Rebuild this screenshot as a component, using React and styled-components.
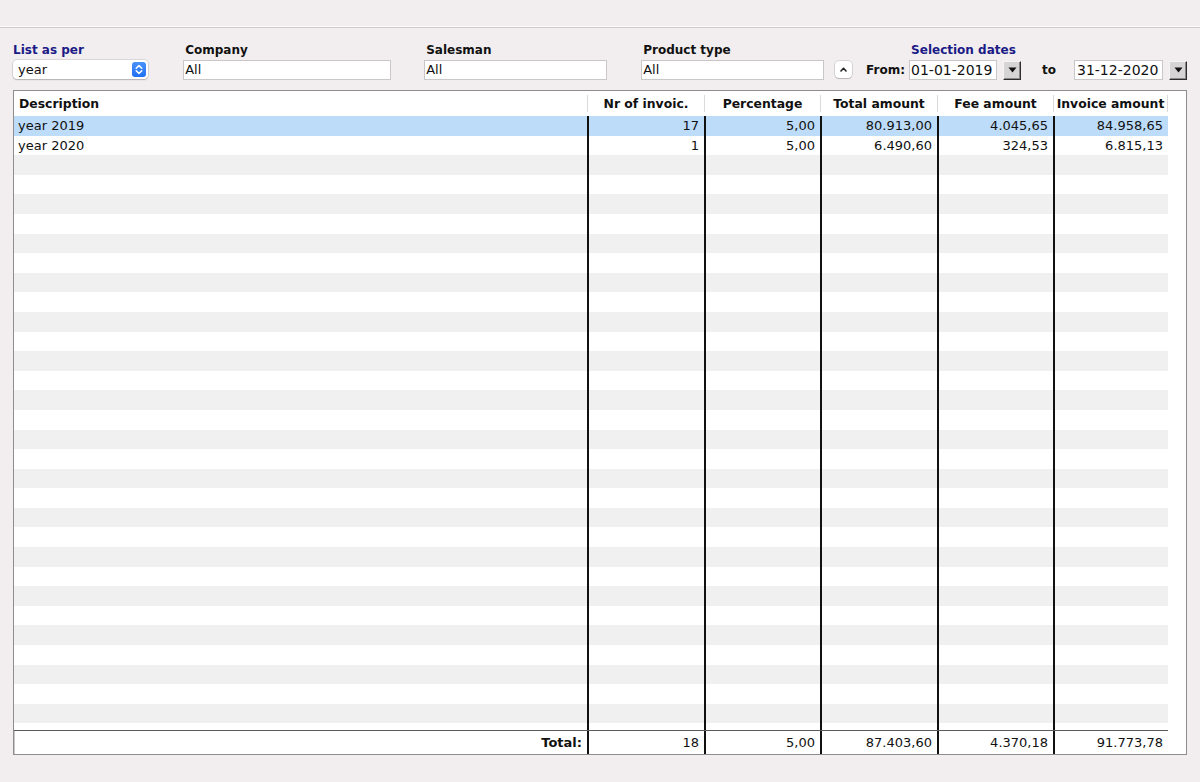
import React from 'react';
import styled, { createGlobalStyle } from 'styled-components';

const GlobalStyle = createGlobalStyle`
    html, body {
        margin: 0;
        padding: 0;
        background: #f2eeef;
    }
    body {
        font-family: "DejaVu Sans", "Liberation Sans", sans-serif;
        color: #111;
    }
`;

const columns = [
    { key: 'desc', title: 'Description', width: 573, align: 'left' },
    { key: 'count', title: 'Nr of invoic.', width: 117, align: 'right' },
    { key: 'pct', title: 'Percentage', width: 116, align: 'right' },
    { key: 'total', title: 'Total amount', width: 117, align: 'right' },
    { key: 'fee', title: 'Fee amount', width: 116, align: 'right' },
    { key: 'invoice', title: 'Invoice amount', width: 115, align: 'right' }
];

const data = [
    { desc: 'year 2019', count: '17', pct: '5,00', total: '80.913,00', fee: '4.045,65', invoice: '84.958,65' },
    { desc: 'year 2020', count: '1', pct: '5,00', total: '6.490,60', fee: '324,53', invoice: '6.815,13' }
];

const totals = { desc: 'Total:', count: '18', pct: '5,00', total: '87.403,60', fee: '4.370,18', invoice: '91.773,78' };

const ROW_COUNT = 32;

const Page = styled.div`
    width: 1200px;
    height: 782px;
    overflow: hidden;
`;

const TopBar = styled.div`
    height: 26px;
    border-bottom: 1px solid #fbf9f9;
    box-shadow: 0 1px 0 #cfcbcc;
`;

const Controls = styled.div`
    display: flex;
    align-items: flex-end;
    padding: 16px 13px 0;
`;

const Field = styled.div`
    display: flex;
    flex-direction: column;
    width: ${p => p.$width}px;
    margin-left: ${p => p.$gap || 0}px;
`;

const FieldLabel = styled.div`
    font-size: 12px;
    font-weight: bold;
    line-height: 15px;
    height: 15px;
    margin-bottom: 2px;
    padding-left: ${p => p.$indent || 0}px;
    color: ${p => (p.$navy ? '#1b1a86' : '#111')};
    white-space: nowrap;
`;

const TextBox = styled.div`
    box-sizing: border-box;
    height: 20px;
    width: ${p => p.$width}px;
    background: #fff;
    border: 1px solid #c9c7c8;
    font-size: ${p => p.$size || 13}px;
    line-height: 18px;
    padding-left: ${p => p.$pad || 1}px;
    white-space: nowrap;
    overflow: hidden;
`;

const SelectBox = styled.div`
    box-sizing: border-box;
    display: flex;
    align-items: center;
    justify-content: space-between;
    height: 19px;
    margin-bottom: 1px;
    background: #fff;
    border-radius: 4px;
    box-shadow: 0 0 0 0.5px rgba(0, 0, 0, 0.18), 0 1px 1.5px rgba(0, 0, 0, 0.18);
    padding: 0 2px 0 5px;
    font-size: 13px;
`;

const Stepper = styled.span`
    display: flex;
    align-items: center;
    justify-content: center;
    width: 14px;
    height: 15px;
    border-radius: 3px;
    background: linear-gradient(#4a93fa, #1f6ff2);
`;

const UpButton = styled.div`
    box-sizing: border-box;
    display: flex;
    align-items: center;
    justify-content: center;
    width: 17px;
    height: 17px;
    margin-left: 11px;
    margin-bottom: 2px;
    background: #fff;
    border-radius: 4px;
    box-shadow: 0 0 0 0.5px rgba(0, 0, 0, 0.22), 0 1px 1px rgba(0, 0, 0, 0.15);
`;

const DateGroup = styled.div`
    display: flex;
    flex-direction: column;
    margin-left: 14px;
`;

const DateRow = styled.div`
    display: flex;
    align-items: center;
    height: 20px;
`;

const InlineLabel = styled.span`
    font-size: 12px;
    font-weight: bold;
    margin-left: ${p => p.$gap || 0}px;
    margin-right: ${p => p.$after || 0}px;
`;

const ComboButton = styled.div`
    box-sizing: border-box;
    display: flex;
    align-items: center;
    justify-content: center;
    width: 18px;
    height: 19px;
    margin-left: 6px;
    background: #d6d4d4;
    border: 1px solid;
    border-color: #f4f4f4 #2e2e2e #2e2e2e #f4f4f4;
    box-shadow: inset -1px -1px 0 #8a8888;
`;

const Frame = styled.div`
    display: flex;
    width: 1172px;
    margin: 10px 0 0 13px;
    background: #fff;
    border: 1px solid #8f8d8e;
    box-shadow: inset 1px 1px 0 #c9c7c8;
`;

const Grid = styled.div`
    display: flex;
    flex-direction: column;
    width: 1154px;
`;

const Gutter = styled.div`
    width: 18px;
    background: #fff;
`;

const HeaderRow = styled.div`
    display: flex;
    padding: 4px 0;
    background: #fff;
`;

const HeaderCell = styled.div`
    box-sizing: border-box;
    width: ${p => p.$width}px;
    height: 17px;
    line-height: 17px;
    font-size: 12.4px;
    font-weight: bold;
    text-align: ${p => (p.$align === 'left' ? 'left' : 'center')};
    padding-left: ${p => (p.$align === 'left' ? 5 : 0)}px;
    border-left: ${p => (p.$first ? 'none' : '1px solid #dcdada')};
    border-right: ${p => (p.$last ? '1px solid #dcdada' : 'none')};
    white-space: nowrap;
`;

const Body = styled.div`
    height: 614px;
    overflow: hidden;
`;

const rowBackground = {
    selected: '#bddcfa',
    odd: '#ffffff',
    even: '#f0f0f0'
};

const Row = styled.div`
    display: flex;
    height: 19.6px;
    background: ${p => rowBackground[p.$variant]};
`;

const Cell = styled.div`
    box-sizing: border-box;
    width: ${p => p.$width}px;
    font-size: 13px;
    font-weight: ${p => (p.$bold ? 'bold' : 'normal')};
    line-height: ${p => p.$lineHeight || 19.6}px;
    text-align: ${p => p.$align};
    padding: ${p => (p.$align === 'left' ? '0 0 0 4px' : '0 5px 0 0')};
    border-left: ${p => (p.$first ? 'none' : '2px solid #111')};
    white-space: nowrap;
`;

const TotalRow = styled.div`
    display: flex;
    height: 24px;
    box-sizing: border-box;
    border-top: 1px solid #5c5a5b;
`;

const StepperIcon = () => (
    <svg width="8" height="11" viewBox="0 0 8 11">
        <path d="M1.2 4.2 L4 1.6 L6.8 4.2" fill="none" stroke="#fff" strokeWidth="1.5" strokeLinecap="round" strokeLinejoin="round" />
        <path d="M1.2 6.8 L4 9.4 L6.8 6.8" fill="none" stroke="#fff" strokeWidth="1.5" strokeLinecap="round" strokeLinejoin="round" />
    </svg>
);

const CaretUp = () => (
    <svg width="7" height="5" viewBox="0 0 7 5">
        <path d="M1 4 L3.5 1.3 L6 4" fill="none" stroke="#222" strokeWidth="1.6" strokeLinecap="round" strokeLinejoin="round" />
    </svg>
);

const ComboArrow = () => (
    <svg width="9" height="6" viewBox="0 0 9 6">
        <path d="M0.5 0.5 H8.5 L4.5 5.5 Z" fill="#111" />
    </svg>
);

const DataRow = ({ item, index }) => {
    const variant = index === 0 ? 'selected' : index % 2 === 1 ? 'odd' : 'even';
    return (
        <Row $variant={variant}>
            {columns.map((col, i) => (
                <Cell key={col.key} $width={col.width} $align={col.align} $first={i === 0}>
                    {item ? item[col.key] : ''}
                </Cell>
            ))}
        </Row>
    );
};

const App = () => {
    const rows = Array.from({ length: ROW_COUNT }, (_, i) => data[i]);

    return (
        <Page>
            <GlobalStyle />
            <TopBar />
            <Controls>
                <Field $width={136}>
                    <FieldLabel $navy>List as per</FieldLabel>
                    <SelectBox>
                        year
                        <Stepper>
                            <StepperIcon />
                        </Stepper>
                    </SelectBox>
                </Field>
                <Field $width={208} $gap={35}>
                    <FieldLabel $indent={2}>Company</FieldLabel>
                    <TextBox $width={208}>All</TextBox>
                </Field>
                <Field $width={183} $gap={33}>
                    <FieldLabel $indent={2}>Salesman</FieldLabel>
                    <TextBox $width={183}>All</TextBox>
                </Field>
                <Field $width={183} $gap={34}>
                    <FieldLabel $indent={2}>Product type</FieldLabel>
                    <TextBox $width={183}>All</TextBox>
                </Field>
                <UpButton>
                    <CaretUp />
                </UpButton>
                <DateGroup>
                    <FieldLabel $navy $indent={45}>Selection dates</FieldLabel>
                    <DateRow>
                        <InlineLabel $after={4}>From:</InlineLabel>
                        <TextBox $width={88} $size={14}>01-01-2019</TextBox>
                        <ComboButton>
                            <ComboArrow />
                        </ComboButton>
                        <InlineLabel $gap={21} $after={18}>to</InlineLabel>
                        <TextBox $width={89} $size={14} $pad={2}>31-12-2020</TextBox>
                        <ComboButton>
                            <ComboArrow />
                        </ComboButton>
                    </DateRow>
                </DateGroup>
            </Controls>

            <Frame>
                <Grid>
                    <HeaderRow>
                        {columns.map((col, i) => (
                            <HeaderCell
                                key={col.key}
                                $width={col.width}
                                $align={col.align}
                                $first={i === 0}
                                $last={i === columns.length - 1}
                            >
                                {col.title}
                            </HeaderCell>
                        ))}
                    </HeaderRow>
                    <Body>
                        {rows.map((item, i) => (
                            <DataRow key={i} item={item} index={i} />
                        ))}
                    </Body>
                    <TotalRow>
                        {columns.map((col, i) => (
                            <Cell
                                key={col.key}
                                $width={col.width}
                                $align="right"
                                $first={i === 0}
                                $bold={i === 0}
                                $lineHeight={23}
                            >
                                {totals[col.key]}
                            </Cell>
                        ))}
                    </TotalRow>
                </Grid>
                <Gutter />
            </Frame>
        </Page>
    );
};

export default App;
